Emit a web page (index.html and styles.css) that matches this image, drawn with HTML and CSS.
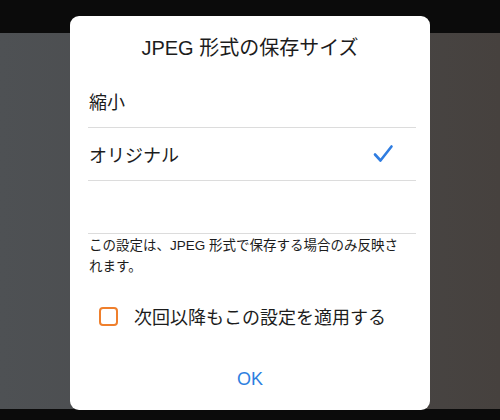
FILE: index.html
```html
<!DOCTYPE html>
<html lang="ja">
<head>
<meta charset="utf-8">
<link rel="stylesheet" href="styles.css">
</head>
<body>
<div class="screen">
  <div class="topbar"></div>
  <div class="backdrop"></div>
  <div class="bottombar"></div>
</div>
<div class="dialog">
  <div class="title">JPEG 形式の保存サイズ</div>
  <ul class="options">
    <li class="option">縮小</li>
    <li class="option">オリジナル
      <svg class="check" width="22" height="20" viewBox="0 0 22 20"><path d="M3 10.5 L8.5 16.5 L19.5 2.5" fill="none" stroke="#2f7de1" stroke-width="2.6" stroke-linecap="round" stroke-linejoin="round"/></svg>
    </li>
    <li class="option"></li>
  </ul>
  <p class="note">この設定は、JPEG 形式で保存する場合のみ反映されます。</p>
  <label class="remember"><span class="box"></span><span>次回以降もこの設定を適用する</span></label>
  <div class="actions"><span class="ok">OK</span></div>
</div>
</body>
</html>
```
FILE: styles.css
```css
html, body {
  margin: 0;
  padding: 0;
  width: 500px;
  height: 420px;
  overflow: hidden;
  background: #0b0b0b;
  font-family: "Liberation Sans", "Noto Sans CJK JP", sans-serif;
}
.screen {
  display: flex;
  flex-direction: column;
  height: 420px;
}
.topbar {
  height: 33px;
  background: #0b0b0b;
}
.backdrop {
  flex: 1;
  background: linear-gradient(90deg, #4e5154 0%, #4a4a4b 50%, #46413e 100%);
}
.bottombar {
  height: 11px;
  background: #0b0b0b;
}
.dialog {
  position: absolute;
  top: 16px;
  left: 70px;
  width: 360px;
  height: 394px;
  box-sizing: border-box;
  background: #fff;
  border-radius: 9px;
  padding: 0 14px 0 18px;
  display: flex;
  flex-direction: column;
  color: #1c1c1c;
}
.title {
  padding-top: 20px;
  line-height: 24px;
  font-size: 20px;
  text-align: center;
  margin-bottom: 15px;
  padding-right: 4px;
}
.options {
  list-style: none;
  margin: 0;
  padding: 0;
}
.option {
  height: 52px;
  border-bottom: 1px solid #dcdcdc;
  display: flex;
  align-items: center;
  justify-content: space-between;
  font-size: 18px;
  padding-left: 1px;
  padding-right: 22px;
}
.check {
  display: block;
}
.note {
  margin: 1px 0 0 0;
  font-size: 13.5px;
  line-height: 21px;
  padding-left: 1px;
  padding-right: 10px;
  color: #1c1c1c;
}
.remember {
  margin-top: 27px;
  height: 24px;
  display: flex;
  align-items: center;
  gap: 16px;
  padding-left: 11px;
  font-size: 18px;
}
.box {
  width: 15px;
  height: 15px;
  border: 2.5px solid #ef7f2c;
  border-radius: 4px;
}
.actions {
  margin-top: 39px;
  display: flex;
  justify-content: center;
  padding-right: 4px;
}
.ok {
  color: #2d7fe0;
  font-size: 18px;
  line-height: 24px;
}
```
